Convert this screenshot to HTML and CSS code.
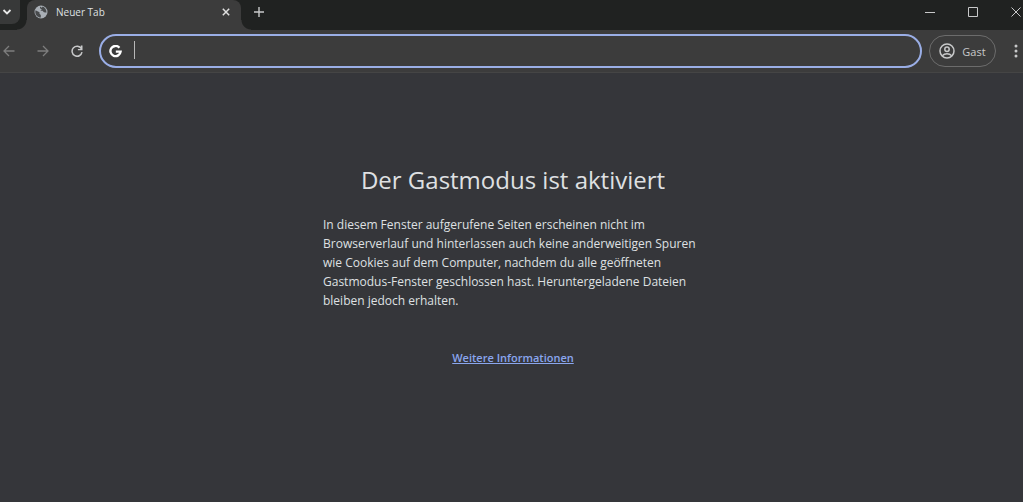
FILE: index.html
```html
<!DOCTYPE html>
<html lang="de">
<head>
<meta charset="utf-8">
<title>Neuer Tab</title>
<link rel="stylesheet" href="styles.css">
</head>
<body>
<header class="tabstrip">
  <button class="tab-search" aria-label="Tabs suchen"><svg width="10" height="10" viewBox="0 0 10 10"><path d="M1.500 3l3.500 3.500L8.500 3" fill="none" stroke="currentColor" stroke-width="1.800"/></svg></button>
  <div class="tab">
    <svg class="globe" width="14" height="14" viewBox="0 0 14 14"><circle cx="7" cy="7" r="6.500" fill="#a9afb6"/><path d="M1.500 5.200L5.500 7.200v1.500l1.300 1.200v2.700C3.800 12.500 1.300 10 1.300 7zM6 1.600v1.600L7.800 4.400 6.300 5.700H8.500l1.400 1.500 1.500.4 1.100-.2C12.500 4.500 10.500 2 8.700 1.600l-.9 1.200z" fill="#484a4c"/></svg>
    <span class="tab-title">Neuer Tab</span>
    <button class="tab-close" aria-label="Tab schließen"><svg width="8" height="8" viewBox="0 0 8 8"><path d="M.8.8l6.400 6.400M7.200.8L.8 7.200" stroke="currentColor" stroke-width="1.500"/></svg></button>
  </div>
  <button class="new-tab" aria-label="Neuer Tab"><svg width="10" height="10" viewBox="0 0 10 10"><path d="M5 0v10M0 5h10" stroke="currentColor" stroke-width="1.400"/></svg></button>
  <div class="window-controls">
    <button aria-label="Minimieren"><svg width="10" height="10" viewBox="0 0 10 10"><path d="M0 5.500h10" stroke="currentColor"/></svg></button>
    <button aria-label="Maximieren"><svg width="10" height="10" viewBox="0 0 10 10"><path d="M.5.5h9v9h-9z" fill="none" stroke="currentColor"/></svg></button>
    <button aria-label="Schließen"><svg width="10" height="10" viewBox="0 0 10 10"><path d="M.5.5l9 9M9.500.5l-9 9" stroke="currentColor"/></svg></button>
  </div>
</header>
<nav class="toolbar">
  <div class="nav-buttons">
    <button class="dim" aria-label="Zurück"><svg width="12" height="12" viewBox="0 0 12 12"><path d="M11.500 6H1.200M6 1L1 6l5 5" fill="none" stroke="currentColor" stroke-width="1.300"/></svg></button>
    <button class="dim" aria-label="Vorwärts"><svg width="12" height="12" viewBox="0 0 12 12"><path d="M.5 6h10.300M6 1l5 5-5 5" fill="none" stroke="currentColor" stroke-width="1.300"/></svg></button>
    <button class="reload" aria-label="Neu laden"><svg width="12" height="12" viewBox="0 0 12 12"><path d="M10.400 3.700A5 5 0 1 0 11 7.200" fill="none" stroke="currentColor" stroke-width="1.500"/><path d="M11.500.5v4.800H6.900V4h2.900V.5z" fill="currentColor"/></svg></button>
  </div>
  <label class="omnibox">
    <svg width="13" height="13" viewBox="0 0 12 12"><path d="M9.600 2.500A4.700 4.700 0 1 0 10.700 6.100H6.300" fill="none" stroke="#fff" stroke-width="2.200"/></svg>
    <span class="caret"></span>
    <input type="text" aria-label="Adress- und Suchleiste">
  </label>
  <button class="profile">
    <svg width="16" height="16" viewBox="0 0 16 16" fill="none" stroke="currentColor" stroke-width="1.500"><circle cx="8" cy="8" r="7"/><circle cx="8" cy="6.200" r="2.200"/><path d="M3.300 12.800c2.500-2.700 6.900-2.700 9.400 0"/></svg>
    <span>Gast</span>
  </button>
  <button class="menu" aria-label="Menü"><svg width="4" height="14" viewBox="0 0 4 14" fill="currentColor"><circle cx="2" cy="2" r="1.500"/><circle cx="2" cy="7" r="1.500"/><circle cx="2" cy="12" r="1.500"/></svg></button>
</nav>
<main class="guest">
  <h1>Der Gastmodus ist aktiviert</h1>
  <p>In diesem Fenster aufgerufene Seiten erscheinen nicht im Browserverlauf und hinterlassen auch keine anderweitigen Spuren wie Cookies auf dem Computer, nachdem du alle geöffneten Gastmodus-Fenster geschlossen hast. Heruntergeladene Dateien bleiben jedoch erhalten.</p>
  <a href="#info">Weitere Informationen</a>
</main>
</body>
</html>
```
FILE: styles.css
```css
* { box-sizing: border-box; }
body {
  margin: 0;
  min-height: 100vh;
  display: flex;
  flex-direction: column;
  background: #35363a;
  color: #dfe0e2;
  font-family: "Open Sans", "Noto Sans", sans-serif;
}
button {
  display: flex;
  align-items: center;
  justify-content: center;
  padding: 0;
  border: 0;
  background: none;
  color: #c8c9ca;
  font: inherit;
}
svg { display: block; flex: none; }

.tabstrip {
  display: flex;
  height: 30px;
  background: #202221;
}
.tab-search {
  width: 20px;
  height: 24px;
  padding-right: 6px;
  border-radius: 0 0 8px 0;
  background: #383939;
  color: #e8e8e8;
}
.tab {
  position: relative;
  display: flex;
  align-items: center;
  width: 214px;
  margin-left: 7px;
  padding: 0 9px 6px 7px;
  border-radius: 8px 8px 0 0;
  background: #3c3c3c;
}
.tab::before,
.tab::after {
  content: "";
  position: absolute;
  bottom: 0;
  width: 10px;
  height: 10px;
}
.tab::before {
  right: 100%;
  background: radial-gradient(circle at 0 0, transparent 9px, #3c3c3c 10px);
}
.tab::after {
  left: 100%;
  background: radial-gradient(circle at 100% 0, transparent 9px, #3c3c3c 10px);
}
.tab-title {
  flex: 1;
  margin-left: 8px;
  font-size: 10px;
  line-height: 14px;
}
.tab-close { width: 12px; height: 12px; color: #e0e0e0; }
.new-tab {
  width: 24px;
  height: 24px;
  margin-left: 6px;
}
.window-controls {
  display: flex;
  gap: 19px;
  height: 24px;
  margin-left: auto;
  margin-right: -5px;
}
.window-controls button { width: 24px; }

.toolbar {
  display: flex;
  align-items: center;
  height: 43px;
  border-bottom: 1px solid #454545;
  background: #3c3c3c;
}
.nav-buttons {
  display: flex;
  gap: 10px;
  width: 100px;
  margin-left: -3px;
}
.nav-buttons button { width: 24px; height: 24px; }
.nav-buttons .dim { color: #7d7d7d; }
.omnibox {
  display: flex;
  align-items: center;
  flex: 1;
  height: 34px;
  margin-left: 2px;
  padding: 0 12px 0 8px;
  border: 2px solid #9aaee6;
  border-radius: 17px;
}
.caret {
  width: 1px;
  height: 18px;
  margin-left: 12px;
  margin-bottom: 2px;
  background: #b8b8b8;
}
.omnibox input {
  flex: 1;
  min-width: 0;
  border: 0;
  outline: 0;
  background: none;
  color: inherit;
  font: inherit;
  font-size: 12px;
}
.profile {
  gap: 7px;
  width: 67px;
  height: 32px;
  margin-left: 7px;
  border: 1px solid #6c6c6c;
  border-radius: 16px;
  font-size: 11px;
}
.menu {
  width: 24px;
  height: 24px;
  margin-left: 8px;
  margin-right: -5px;
}

.guest {
  display: flex;
  flex-direction: column;
  align-items: center;
  padding: 90px 24px 24px 27px;
}
.guest h1 {
  margin: 0 0 18px;
  font-size: 24px;
  font-weight: 400;
  line-height: 34px;
}
.guest p {
  width: 100%;
  max-width: 380px;
  margin: 0 0 39px;
  font-size: 12px;
  line-height: 19px;
}
.guest a {
  color: #8aa6ee;
  font-size: 11px;
  font-weight: 600;
  line-height: 18px;
}
```
